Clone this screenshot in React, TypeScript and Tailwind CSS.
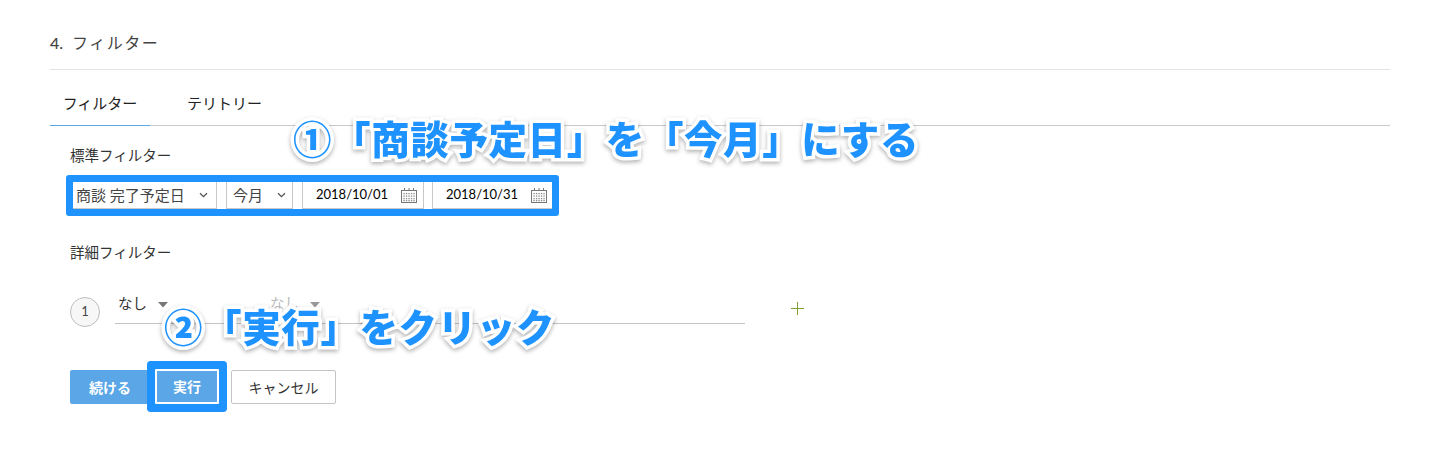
const FONT = "font-['Lato','Noto_Sans_CJK_JP',sans-serif]";

function Chevron() {
  return (
    <svg width="9" height="6" viewBox="0 0 9 6" className="shrink-0" aria-hidden>
      <path d="M1 1.2 L4.5 4.7 L8 1.2" fill="none" stroke="#555" strokeWidth="1.3" />
    </svg>
  );
}

function Caret({ tone = "#777" }: { tone?: string }) {
  return (
    <svg width="10" height="6" viewBox="0 0 10 6" className="shrink-0" aria-hidden>
      <path d="M0 0 H10 L5 5.5 Z" fill={tone} />
    </svg>
  );
}

function CalendarIcon() {
  return (
    <svg width="16" height="15" viewBox="0 0 16 15" className="shrink-0" aria-hidden>
      <rect x="0.5" y="2.5" width="15" height="12" fill="none" stroke="#777" />
      <path d="M3.5 0 V3 M8 0 V3 M12.5 0 V3" stroke="#777" />
      {[5, 7.5, 10, 12].map((y) =>
        [3, 5.5, 8, 10.5, 13].map((x) => (
          <rect key={`${x}-${y}`} x={x - 0.6} y={y} width="1.3" height="1.3" fill="#888" />
        ))
      )}
    </svg>
  );
}

function DateField({ value, className }: { value: string; className: string }) {
  return (
    <div className={`flex h-full items-center border-b border-[#c8c8c8] ${className}`}>
      <span className="text-[13px] text-black">{value}</span>
      <span className="ml-auto"><CalendarIcon /></span>
    </div>
  );
}

function Callout({ text, className }: { text: string; className: string }) {
  return (
    <div
      className={`absolute whitespace-nowrap font-['Noto_Sans_CJK_JP',sans-serif] font-black text-[#1e93ff] [-webkit-text-stroke:7px_#fff] [paint-order:stroke_fill] [filter:drop-shadow(0_2px_2px_rgba(0,0,0,0.3))] ${className}`}
    >
      {text}
    </div>
  );
}

export default function App() {
  return (
    <div className={`relative h-[475px] w-[1440px] overflow-hidden bg-white px-[50px] text-[#333] ${FONT}`}>
      <div className="flex h-[70px] items-center border-b border-[#e4e4e4] pt-[16px] text-[16px] text-[#444]">
        <span className="font-medium">4.</span>
        <span className="ml-[9px] tracking-[1.5px]">フィルター</span>
      </div>

      <div className="flex h-[56px] items-center border-b border-[#c9c9c9] text-[15px] text-[#222]">
        <div className="relative flex h-full w-[100px] items-center justify-center pt-[11px] after:absolute after:bottom-[-1px] after:left-0 after:h-[1px] after:w-full after:bg-[#5ba6e6]">
          フィルター
        </div>
        <div className="ml-[37px] pt-[11px]">テリトリー</div>
      </div>

      <div className="pl-[20px]">
        <div className="mt-[20px] text-[14.5px] leading-[20px]">標準フィルター</div>

        <div className="ml-[-4px] mt-[9px] flex h-[41px] w-[493px] items-stretch rounded-[3px] border-[7px] border-[#1e93ff] text-[15px] text-[#444]">
          <div className="flex h-full w-[144px] items-center border-b border-r border-[#c8c8c8] pl-[3px] pr-[8px]">
            <span>商談 完了予定日</span>
            <span className="ml-auto"><Chevron /></span>
          </div>
          <div className="w-[10px] border-r border-[#c8c8c8]" />
          <div className="flex h-full w-[66px] items-center border-b border-r border-[#c8c8c8] pl-[6px] pr-[6px]">
            <span>今月</span>
            <span className="ml-auto"><Chevron /></span>
          </div>
          <div className="w-[10px] border-r border-[#c8c8c8]" />
          <DateField value="2018/10/01" className="w-[121px] border-r pl-[13px] pr-[6px]" />
          <div className="w-[9px] border-r border-[#c8c8c8]" />
          <DateField value="2018/10/31" className="flex-1 pl-[13px] pr-[5px]" />
        </div>

        <div className="mt-[27px] text-[14.5px] leading-[20px]">詳細フィルター</div>

        <div className="mt-[32px] flex items-start">
          <div className="mt-[2px] flex h-[30px] w-[30px] items-center justify-center rounded-full border border-[#bcbcbc] bg-[#f7f7f7] text-[13px] text-[#444]">
            1
          </div>
          <div className="ml-[15px] flex h-[29px] w-[630px] items-start border-b border-[#c4c4c4] pl-[3px] text-[14.5px]">
            <span className="mt-[-1px] leading-[20px]">なし</span>
            <span className="ml-[11px] mt-[7px]"><Caret /></span>
            <span className="ml-[102px] mt-[-1px] leading-[20px] text-[#bbb]">なし</span>
            <span className="ml-[11px] mt-[7px]"><Caret tone="#999" /></span>
          </div>
          <svg width="13" height="13" viewBox="0 0 13 13" className="ml-[46px] mt-[7px]" aria-hidden>
            <path d="M6.5 0 V13 M0 6.5 H13" stroke="#7f9f2f" />
          </svg>
        </div>

        <div className="mt-[43px] flex items-start text-[14px]">
          <button className="h-[34px] w-[80px] rounded-[2px] bg-[#5ba6e6] font-bold text-white">続ける</button>
          <button className="relative ml-[5px] mt-[-1px] h-[35px] w-[64px] rounded-[1px] border-2 border-white bg-[#5ba6e6] font-bold text-white shadow-[0_0_0_8px_#1e93ff]">
            実行
          </button>
          <button className="ml-[12px] h-[34px] w-[105px] rounded-[2px] border border-[#c4c4c4] bg-white text-[#333]">
            キャンセル
          </button>
        </div>
      </div>

      <Callout text="①「商談予定日」を「今月」にする" className="left-[293px] top-[110px] text-[38.5px] leading-[54px] tracking-[0.6px]" />
      <Callout text="②「実行」をクリック" className="left-[164px] top-[298px] text-[38.5px] leading-[54px] tracking-[0.6px]" />
    </div>
  );
}
